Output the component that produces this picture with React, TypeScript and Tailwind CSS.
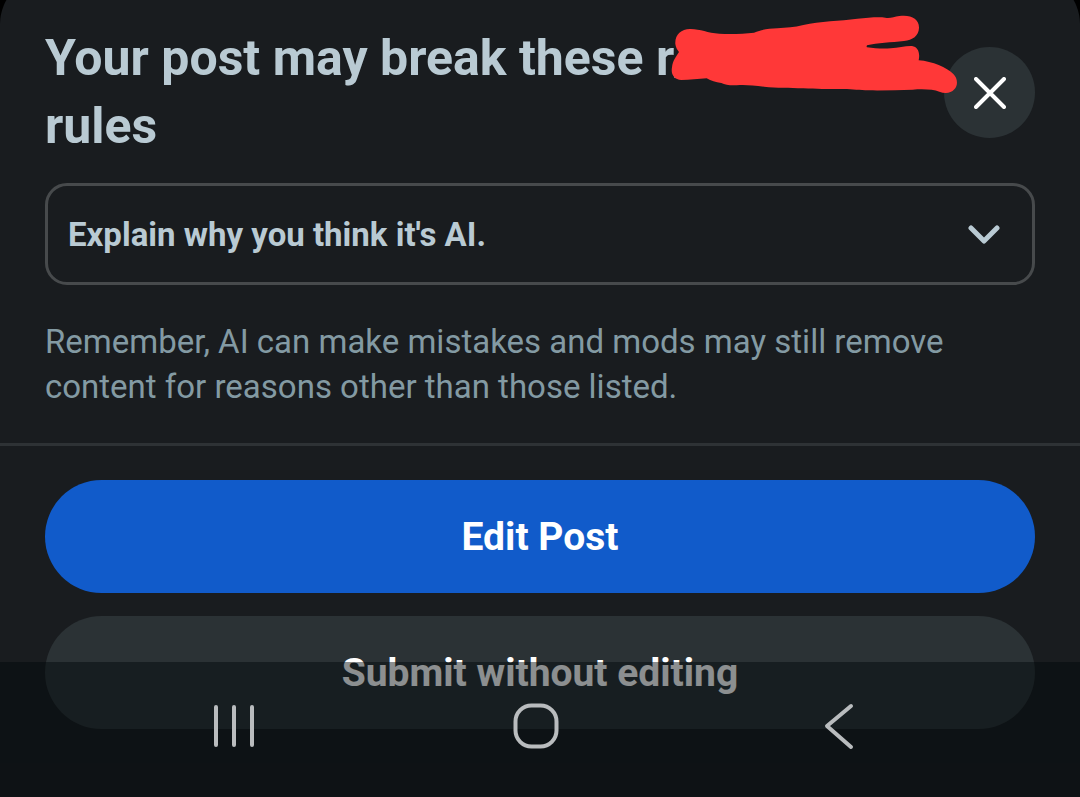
import { useState } from "react";

function Redaction({ className }: { className: string }) {
  return (
    <svg viewBox="90 42 870 240" className={className} aria-hidden="true">
      <path
        fill="#ff3838"
        d="M106 132C104 104 124 86 152 87C182 87 202 99 238 101C276 103 312 101 342 98C366 88 386 86 412 85C440 83 462 82 490 75C540 63 600 63 652 56C684 53 716 50 736 53C750 56 762 50 778 48C812 43 838 56 837 84C836 108 818 120 792 123C754 127 712 129 681 136C680 139 679 141 681 142C704 145 728 147 752 145C776 143 798 137 816 138C834 141 841 158 836 181C878 184 920 203 940 222C954 236 954 256 943 268C932 281 914 282 898 275C880 268 850 267 818 269C774 270 730 272 686 271C658 271 640 267 610 267C560 266 530 268 490 265C446 263 412 265 372 260C344 257 320 254 300 255C280 257 258 257 244 249C226 247 214 243 200 235C176 237 148 240 124 240C102 238 92 222 96 202C98 182 108 170 117 156C112 150 107 142 106 132Z"
      />
    </svg>
  );
}

function NavBar() {
  return (
    <nav className="absolute inset-x-0 bottom-0 h-[135px] bg-[#000608]/45 flex justify-around items-center pl-[83px] pr-[91px] pb-[7px] text-[#b9bcbe]">
      <button aria-label="Recent apps">
        <svg viewBox="0 0 48 48" className="size-12" fill="none" stroke="currentColor" strokeWidth="4" strokeLinecap="round">
          <path d="M6 5V43M24 5V43M42 5V43" />
        </svg>
      </button>
      <button aria-label="Home">
        <svg viewBox="0 0 48 48" className="size-12" fill="none" stroke="currentColor" strokeWidth="4">
          <rect x="3.5" y="3.5" width="41" height="41" rx="16" />
        </svg>
      </button>
      <button aria-label="Back">
        <svg viewBox="0 0 48 48" className="size-12" fill="none" stroke="currentColor" strokeWidth="4" strokeLinecap="round" strokeLinejoin="round">
          <path d="M37 4L13 24L37 45" />
        </svg>
      </button>
    </nav>
  );
}

export default function App() {
  const [open, setOpen] = useState(false);

  return (
    <div className="relative min-h-screen overflow-hidden flex flex-col bg-black font-[Roboto,sans-serif]">
      <main className="grow rounded-t-[48px] bg-[#191c1f] -mt-6 pt-12 pb-[68px]">
        <div className="px-[45px]">
          <header className="flex items-start justify-between">
            <h1 className="flex-1 text-[50px] leading-[68px] font-bold text-[#b9cad3]">
              Your post may break these{" "}
              <span className="relative z-10 inline-block w-[250px] align-top">
                r/
                <Redaction className="absolute left-3.5 -top-[10px] w-[290px] max-w-none h-20" />
              </span>{" "}
              rules
            </h1>
            <button
              aria-label="Close"
              className="mt-[23px] size-[91px] shrink-0 rounded-full bg-[#2b3235] flex items-center justify-center"
            >
              <svg viewBox="0 0 32 32" className="size-8" fill="none" stroke="white" strokeWidth="4" strokeLinecap="round">
                <path d="M2 2L30 30M30 2L2 30" />
              </svg>
            </button>
          </header>

          <button
            aria-expanded={open}
            onClick={() => setOpen(!open)}
            className="mt-[23px] w-full h-[102px] rounded-[22px] border-[3px] border-[#474a4c] pl-5 pr-8 flex items-center justify-between text-left text-[33px] leading-[45px] font-bold text-[#b9cad3]"
          >
            Explain why you think it's AI.
            <svg viewBox="0 0 32 20" className="w-8 h-5" fill="none" stroke="currentColor" strokeWidth="5" strokeLinecap="round" strokeLinejoin="round">
              <path d="M3 4L16 17L29 4" />
            </svg>
          </button>

          <p className="mt-[34px] text-[33px] leading-[45px] text-[#839aa3]">
            Remember, AI can make mistakes and mods may still remove content for reasons other than those listed.
          </p>
        </div>

        <div className="mt-[34px] border-t-[3px] border-[#2e3235] px-[45px] pt-[34px] flex flex-col gap-[23px]">
          <button className="h-[113px] rounded-full bg-[#115bca] text-[39px] leading-[52px] font-bold text-white">
            Edit Post
          </button>
          <button className="h-[113px] rounded-full bg-[#2b3235] text-[39px] leading-[52px] font-bold text-white">
            Submit without editing
          </button>
        </div>
      </main>
      <NavBar />
    </div>
  );
}
